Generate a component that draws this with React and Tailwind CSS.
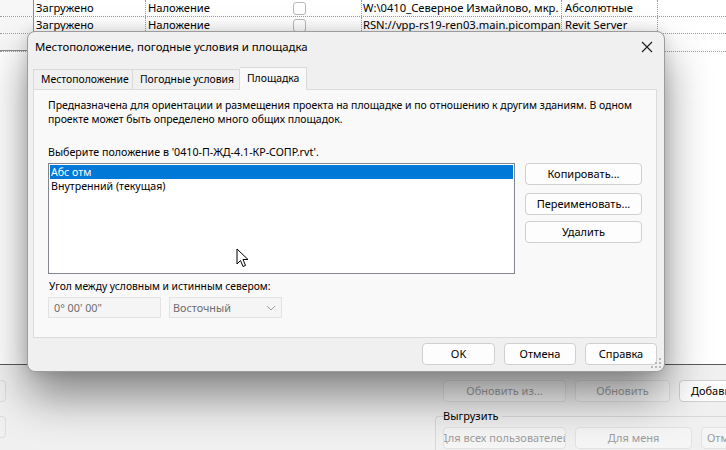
import React from "react";

const font = { fontFamily: '"Noto Sans", "Open Sans", sans-serif' };

function Cursor() {
  return (
    <svg width="14" height="20" viewBox="0 0 14 20" className="absolute left-[236px] top-[248px]">
      <path d="M1 1 L1 16 L4.5 12.5 L7 18.5 L9.5 17.5 L7 11.5 L12 11.5 Z" fill="#fff" stroke="#000" strokeWidth="1" strokeLinejoin="round" />
    </svg>
  );
}

function Grip() {
  const dots = [
    [8, 0], [8, 4], [4, 4], [8, 8], [4, 8], [0, 8],
  ];
  return (
    <svg width="11" height="11" viewBox="0 0 11 11" className="absolute right-[2px] bottom-[2px]">
      {dots.map(([x, y], i) => (
        <rect key={i} x={x} y={y} width="2" height="2" fill="#b8b8b8" />
      ))}
    </svg>
  );
}

function Btn({ children, className = "", disabled }) {
  return (
    <div
      className={`flex h-[22px] shrink-0 items-center justify-center overflow-hidden whitespace-nowrap rounded-[4px] border text-[11px] ${
        disabled ? "border-[#e2e2e2] bg-[#f5f5f5] text-[#9d9d9d]" : "border-[#d0d0d0] bg-[#fdfdfd] text-black"
      } ${className}`}
    >
      {children}
    </div>
  );
}

function TableRow({ status, kind, path, pos }) {
  return (
    <div className="flex h-[17px] whitespace-nowrap border-b border-dotted border-[#9a9a9a] text-[11.2px] leading-[16px] text-black">
      <div className="w-[34px] shrink-0 border-r border-[#8c8c8c] bg-[#f7f7f7]"></div>
      <div className="w-[112px] shrink-0 border-r border-dotted border-[#9a9a9a] pl-[2px]">{status}</div>
      <div className="flex w-[216px] shrink-0 border-r border-dotted border-[#9a9a9a] pl-[2px]">
        <span className="w-[145px]">{kind}</span>
        <span className="mt-[2px] h-[13px] w-[13px] rounded-[3px] border border-[#b8b8b8] bg-white"></span>
      </div>
      <div className="w-[200px] shrink-0 overflow-hidden border-r border-dotted border-[#9a9a9a] pl-[1px]">{path}</div>
      <div className="w-[96px] shrink-0 border-r border-dotted border-[#9a9a9a] pl-[3px]">{pos}</div>
      <div className="flex-1"></div>
    </div>
  );
}

export default function App() {
  return (
    <div className="relative h-[450px] w-[726px] overflow-hidden bg-[#f0f0f0]" style={font}>
      {/* background: links table */}
      <div className="flex h-[365px] flex-col border-b border-[#5a5a5a] bg-white">
        <TableRow status="Загружено" kind="Наложение" path="W:\0410_Северное Измайлово, мкр." pos="Абсолютные" />
        <TableRow status="Загружено" kind="Наложение" path="RSN://vpp-rs19-ren03.main.picompany.ru" pos="Revit Server" />
        <div className="flex h-[18px] border-b border-dotted border-[#9a9a9a] text-[11.2px] leading-[16px]">
          <div className="w-[34px] overflow-hidden border-b border-r border-[#8c8c8c] bg-[#f7f7f7] text-right">t</div>
        </div>
        <div className="flex-1"></div>
      </div>

      {/* background: bottom buttons */}
      <div className="flex gap-[9px] pl-[443px] pt-[15px]">
        <Btn disabled className="w-[123px]">Обновить из...</Btn>
        <Btn disabled className="w-[95px]">Обновить</Btn>
        <Btn className="w-[90px] justify-start border-[#c4c4c4] pl-[11px]">Добавить...</Btn>
      </div>
      <div className="ml-[435px] mt-[14px] h-[60px] rounded-tl-[4px] border-l border-t border-[#d8d8d8] pl-[7px]">
        <div className="-mt-[9px] w-fit bg-[#f0f0f0] pr-[3px] text-[11px] leading-[16px] text-black">Выгрузить</div>
        <div className="mt-[3px] flex gap-[9px]">
          <Btn disabled className="w-[123px] text-[11.3px]">Для всех пользователей</Btn>
          <Btn disabled className="w-[117px]">Для меня</Btn>
          <Btn disabled className="w-[90px] justify-start pl-[5px]">Отменить</Btn>
        </div>
      </div>
      <div className="absolute left-[-20px] top-[380px] h-[22px] w-[26px] rounded-[4px] border border-[#dcdcdc]"></div>
      <div className="absolute left-[-20px] top-[416px] h-[22px] w-[26px] rounded-[4px] border border-[#dcdcdc]"></div>

      {/* dialog */}
      <div className="absolute left-[27px] top-[31px] flex h-[341px] w-[638px] flex-col whitespace-nowrap rounded-[8px] border border-[#9c9c9c] bg-[#f0f0f0] shadow-[0_24px_45px_rgba(0,0,0,0.45),0_0_14px_rgba(0,0,0,0.12)]">
        <div className="flex h-[30px] items-center justify-between pl-[7px] pr-[8px]">
          <span className="text-[11.4px] text-black">Местоположение, погодные условия и площадка</span>
          <svg width="12" height="12" viewBox="0 0 12 12" className="mr-[3px]">
            <path d="M1 1 L11 11 M11 1 L1 11" stroke="#1a1a1a" strokeWidth="1.1" />
          </svg>
        </div>

        <div className="ml-[5px] mt-[5px] flex items-end text-[10.4px] text-black">
          <div className="flex h-[20px] w-[100px] items-center border border-b-0 border-[#d9d9d9] pl-[7px]">Местоположение</div>
          <div className="flex h-[20px] w-[107px] items-center border-r border-t border-[#d9d9d9] pl-[7px]">Погодные условия</div>
          <div className="relative -mb-[1px] flex h-[23px] w-[67px] items-center border-r border-t border-[#d9d9d9] bg-[#f9f9f9] pl-[7px]">Площадка</div>
        </div>

        <div className="ml-[5px] mr-[7px] flex h-[249px] flex-col border border-[#dcdcdc] bg-[#f9f9f9] pl-[14px] pt-[8px] text-[11px] leading-[14px] text-black">
          <p className="text-[10.45px]">
            Предназначена для ориентации и размещения проекта на площадке и по отношению к другим зданиям. В одном
            <br />
            проекте может быть определено много общих площадок.
          </p>
          <p className="mt-[19px] text-[10.7px]">Выберите положение в '0410-П-ЖД-4.1-КР-СОПР.rvt'.</p>
          <div className="mt-[4px] flex gap-[10px]">
            <div className="h-[111px] w-[467px] border border-[#82868e] bg-white p-[1px] text-[10.6px]">
              <div className="h-[14px] bg-[#0078d7] pl-[1px] text-white">Абс отм</div>
              <div className="pl-[1px]">Внутренний (текущая)</div>
            </div>
            <div className="flex w-[117px] flex-col">
              <Btn>Копировать...</Btn>
              <Btn className="mt-[8px]">Переименовать...</Btn>
              <Btn className="mt-[6px]">Удалить</Btn>
            </div>
          </div>
          <p className="ml-[1px] mt-[5px] text-[10.3px]">Угол между условным и истинным севером:</p>
          <div className="mt-[4px] flex gap-[8px] text-[10.8px]">
            <div className="flex h-[21px] w-[113px] items-center border border-[#e3e3e3] bg-[#f5f5f5] pl-[5px] text-[#6d6d6d]">0° 00' 00"</div>
            <div className="flex h-[21px] w-[113px] items-center justify-between border border-[#e3e3e3] bg-[#f5f5f5] pl-[3px] pr-[5px] text-[#6d6d6d]">
              <span>Восточный</span>
              <svg width="10" height="6" viewBox="0 0 10 6">
                <path d="M1 1 L5 5 L9 1" fill="none" stroke="#a0a0a0" strokeWidth="1" />
              </svg>
            </div>
          </div>
        </div>

        <div className="mr-[7px] mt-[5px] flex justify-end gap-[9px]">
          <Btn className="w-[73px] border-[#0067c0]">OK</Btn>
          <Btn className="w-[72px]">Отмена</Btn>
          <Btn className="w-[72px]">Справка</Btn>
        </div>
        <Grip />
      </div>

      <Cursor />
    </div>
  );
}
